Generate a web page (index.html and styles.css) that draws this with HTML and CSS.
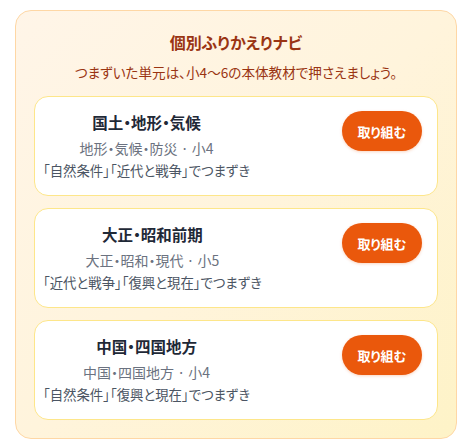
FILE: index.html
```html
<!DOCTYPE html>
<html lang="ja">
<head>
<meta charset="utf-8">
<title>個別ふりかえりナビ</title>
<link rel="stylesheet" href="styles.css">
</head>
<body>
<section class="navi">
  <h1 class="navi-title">個別ふりかえりナビ</h1>
  <p class="navi-sub">つまずいた単元は、小4〜6の本体教材で押さえましょう。</p>
  <div class="list">
    <div class="card">
      <div class="info">
        <div class="unit">国土・地形・気候</div>
        <div class="meta">地形・気候・防災 · 小4</div>
        <div class="reason">「自然条件」「近代と戦争」でつまずき</div>
      </div>
      <button class="go">取り組む</button>
    </div>
    <div class="card">
      <div class="info">
        <div class="unit">大正・昭和前期</div>
        <div class="meta">大正・昭和・現代 · 小5</div>
        <div class="reason">「近代と戦争」「復興と現在」でつまずき</div>
      </div>
      <button class="go">取り組む</button>
    </div>
    <div class="card">
      <div class="info">
        <div class="unit">中国・四国地方</div>
        <div class="meta">中国・四国地方 · 小4</div>
        <div class="reason">「自然条件」「復興と現在」でつまずき</div>
      </div>
      <button class="go">取り組む</button>
    </div>
  </div>
</section>
</body>
</html>
```

FILE: styles.css
```css
* { box-sizing: border-box; }
html, body { margin: 0; padding: 0; background: #ffffff; }
body {
  font-family: "Noto Sans CJK JP", "Noto Sans", sans-serif;
  font-feature-settings: "palt";
  padding: 10px 16px 0 15px;
}
.navi {
  width: 442px;
  border: 1px solid #fed7a5;
  border-radius: 16px;
  padding: 18px;
  background: linear-gradient(135deg, #fff5e8 0%, #fff4dc 50%, #fef3c7 100%);
}
.navi-title {
  margin: 0;
  text-align: center;
  font-size: 16px;
  line-height: 26px;
  font-weight: 700;
  color: #9a3412;
}
.navi-sub {
  margin: 6px 0 0;
  text-align: center;
  font-size: 13.6px;
  line-height: 22px;
  color: #9a3412;
}
.list {
  margin-top: 13px;
  display: flex;
  flex-direction: column;
  gap: 12px;
}
.card {
  display: flex;
  justify-content: space-between;
  align-items: flex-start;
  background: #ffffff;
  border: 1px solid #fde68a;
  border-radius: 14px;
  padding: 13px 15px 14px 8px;
}
.info {
  text-align: center;
}
.unit {
  font-size: 15.5px;
  line-height: 24px;
  font-weight: 700;
  color: #1f2937;
}
.meta {
  margin-top: 3px;
  font-size: 14px;
  line-height: 22px;
  color: #6b7280;
}
.reason {
  font-size: 13.4px;
  line-height: 22px;
  color: #4b5563;
}
.go {
  flex: none;
  width: 80px;
  height: 40px;
  border: none;
  border-radius: 20px;
  background: #ea580c;
  color: #ffffff;
  font-family: inherit;
  font-feature-settings: "palt";
  font-size: 13px;
  font-weight: 700;
  box-shadow: 0 1px 3px rgba(234, 88, 12, 0.25);
  margin-top: 1px;
}
```
